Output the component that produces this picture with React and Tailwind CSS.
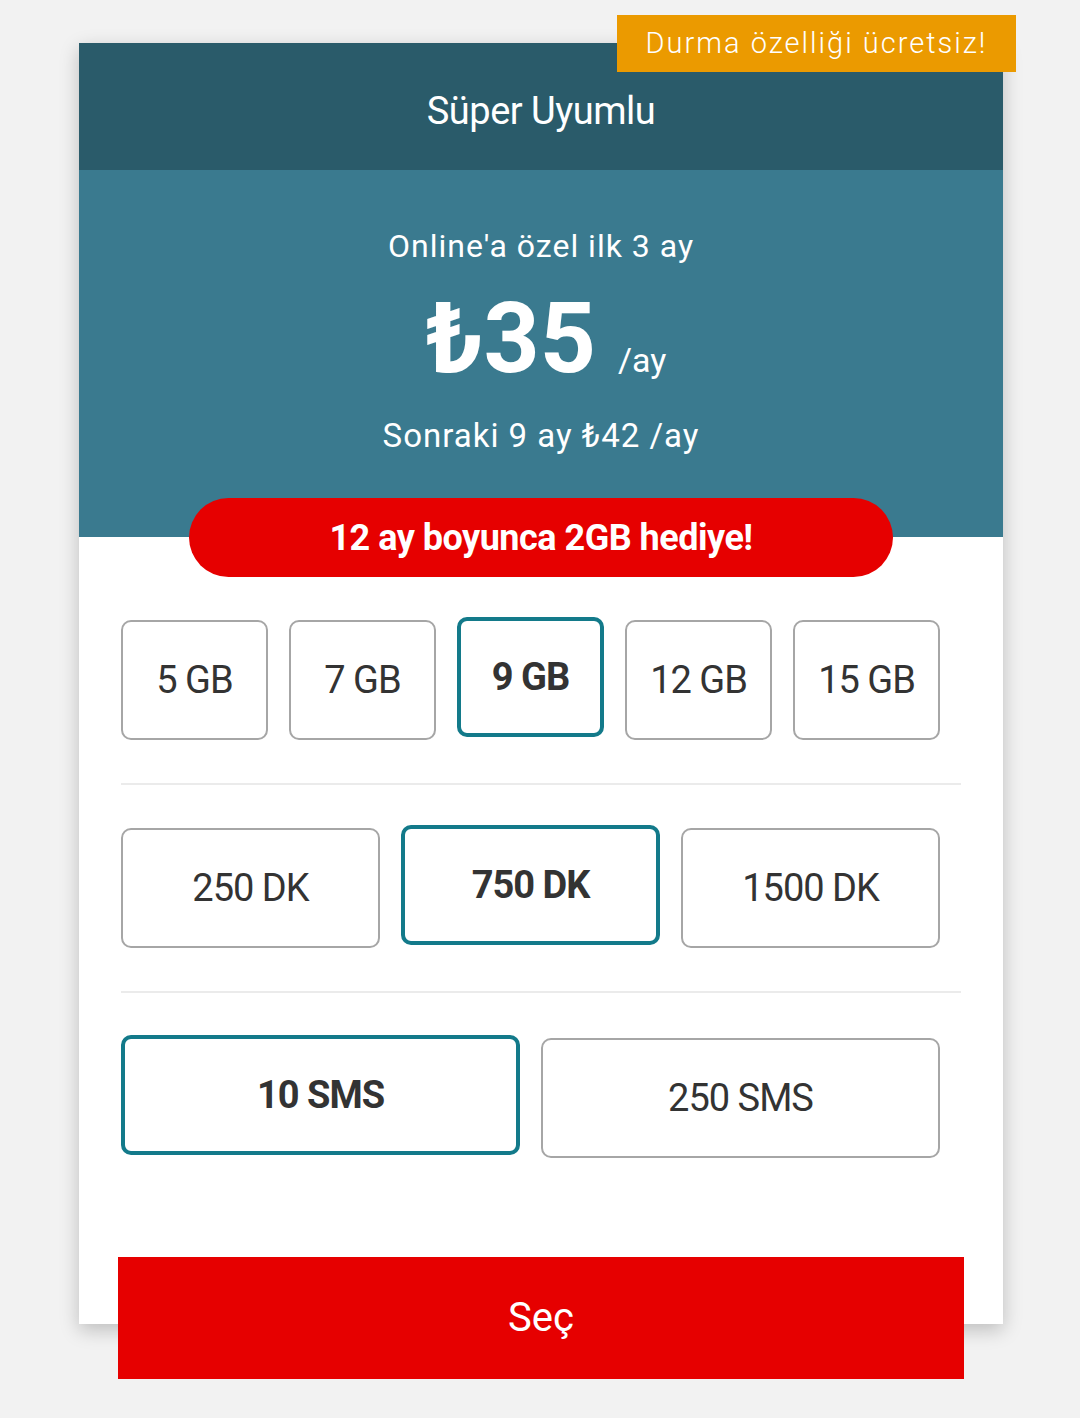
import { useState } from "react";

const gbOptions = ["5 GB", "7 GB", "9 GB", "12 GB", "15 GB"];
const dkOptions = ["250 DK", "750 DK", "1500 DK"];
const smsOptions = ["10 SMS", "250 SMS"];

function OptionBox({ label, selected, onClick }) {
    return (
        <div className="pr-[21px]">
            <button
                onClick={onClick}
                className={`w-full h-[120px] rounded-[10px] bg-white flex items-center justify-center text-[38px] text-[#333333] tracking-[-1px] ${
                    selected
                        ? "border-[4px] border-[#137a8a] font-bold -translate-y-[3px]"
                        : "border-2 border-[#a6a6a6]"
                }`}
            >
                {label}
            </button>
        </div>
    );
}

function App() {
    const [gb, setGb] = useState("9 GB");
    const [dk, setDk] = useState("750 DK");
    const [sms, setSms] = useState("10 SMS");

    return (
        <div
            className="min-h-[1418px] bg-[#f2f2f2] pt-[43px] pl-[79px]"
            style={{ fontFamily: "Roboto, 'Noto Sans', sans-serif" }}
        >
            <div className="relative flex flex-col w-[924px] bg-white shadow-[0_6px_18px_rgba(0,0,0,0.22)]">
                {/* badge */}
                <div className="absolute -top-[28px] -right-[13px] w-[399px] h-[57px] bg-[#eb9a00] flex items-center justify-center text-white text-[29px] font-light tracking-[2px] z-10">
                    Durma özelliği ücretsiz!
                </div>

                {/* header */}
                <div className="h-[127px] bg-[#2a5b6a] flex items-center justify-center text-white text-[38px] tracking-[-0.5px] pt-[10px]">
                    Süper Uyumlu
                </div>

                {/* price */}
                <div className="h-[367px] bg-[#3a7a8f] text-white flex flex-col items-center pt-[56px]">
                    <p className="text-[32px] tracking-[1px] leading-[40px]">
                        Online'a özel ilk 3 ay
                    </p>
                    <div className="flex items-baseline mt-[18px] h-[110px] pl-[10px]">
                        <span className="text-[98px] font-bold leading-[110px]">₺35</span>
                        <span className="text-[34px] ml-[22px]">/ay</span>
                    </div>
                    <p className="text-[33px] tracking-[1px] leading-[40px] mt-[22px]">
                        Sonraki 9 ay ₺42 /ay
                    </p>
                </div>

                {/* gift pill */}
                <div className="relative -mt-[39px] mx-[110px] h-[79px] rounded-full bg-[#e60000] flex items-center justify-center text-white text-[36px] font-bold tracking-[-0.5px]">
                    12 ay boyunca 2GB hediye!
                </div>

                <div className="px-[42px] pt-[43px]">
                    <div className="grid grid-cols-5">
                        {gbOptions.map((o) => (
                            <OptionBox key={o} label={o} selected={gb === o} onClick={() => setGb(o)} />
                        ))}
                    </div>
                    <div className="h-[2px] bg-[#ebebeb] my-[43px]" />
                    <div className="grid grid-cols-3">
                        {dkOptions.map((o) => (
                            <OptionBox key={o} label={o} selected={dk === o} onClick={() => setDk(o)} />
                        ))}
                    </div>
                    <div className="h-[2px] bg-[#ebebeb] mt-[43px] mb-[45px]" />
                    <div className="grid grid-cols-2">
                        {smsOptions.map((o) => (
                            <OptionBox key={o} label={o} selected={sms === o} onClick={() => setSms(o)} />
                        ))}
                    </div>
                </div>

                <div className="px-[39px] pt-[99px] -mb-[55px]">
                    <button className="relative w-full h-[122px] bg-[#e60000] text-white text-[40px] flex items-center justify-center">
                        Seç
                    </button>
                </div>
            </div>
        </div>
    );
}

export default App;
